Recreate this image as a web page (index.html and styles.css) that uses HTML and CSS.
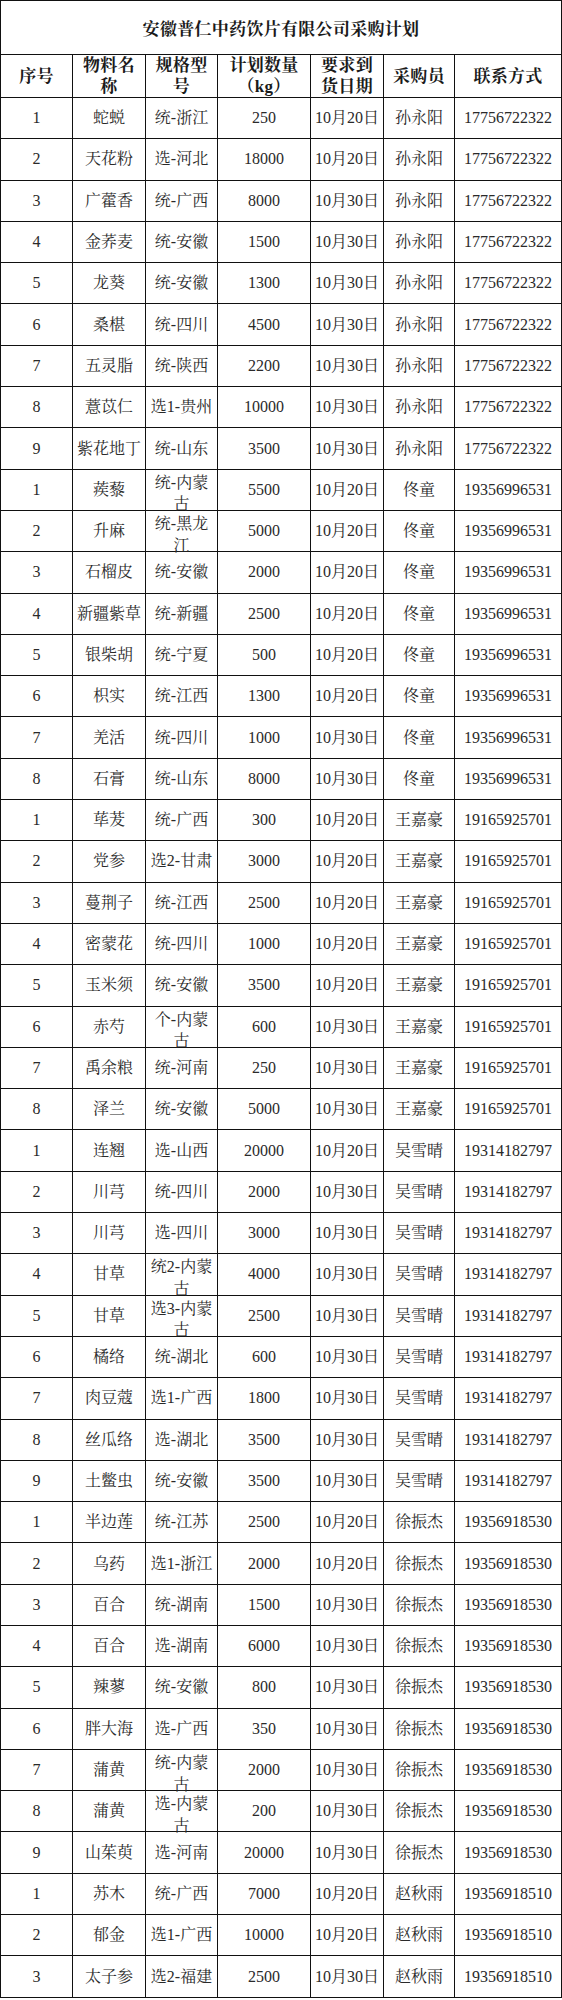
FILE: index.html
```html
<!DOCTYPE html>
<html lang="zh-CN">
<head>
<meta charset="utf-8">
<title>安徽普仁中药饮片有限公司采购计划</title>
<link rel="stylesheet" href="styles.css">
</head>
<body>
<table class="plan">
<colgroup>
<col class="w1"><col class="w2"><col class="w3"><col class="w4"><col class="w5"><col class="w6"><col class="w7">
</colgroup>
<thead>
<tr><td colspan="7" class="title"><div class="c t">安徽普仁中药饮片有限公司采购计划</div></td></tr>
<tr class="head">
<th><div class="c h">序号</div></th>
<th><div class="c h">物料名<br>称</div></th>
<th><div class="c h">规格型<br>号</div></th>
<th><div class="c h">计划数量<br>（kg）</div></th>
<th><div class="c h">要求到<br>货日期</div></th>
<th><div class="c h">采购员</div></th>
<th><div class="c h">联系方式</div></th>
</tr>
</thead>
<tbody>
<tr><td><div class="c">1</div></td><td><div class="c">蛇蜕</div></td><td><div class="c">统-浙江</div></td><td><div class="c">250</div></td><td><div class="c">10月20日</div></td><td><div class="c">孙永阳</div></td><td><div class="c">17756722322</div></td></tr>
<tr><td><div class="c">2</div></td><td><div class="c">天花粉</div></td><td><div class="c">选-河北</div></td><td><div class="c">18000</div></td><td><div class="c">10月20日</div></td><td><div class="c">孙永阳</div></td><td><div class="c">17756722322</div></td></tr>
<tr><td><div class="c">3</div></td><td><div class="c">广藿香</div></td><td><div class="c">统-广西</div></td><td><div class="c">8000</div></td><td><div class="c">10月30日</div></td><td><div class="c">孙永阳</div></td><td><div class="c">17756722322</div></td></tr>
<tr><td><div class="c">4</div></td><td><div class="c">金荞麦</div></td><td><div class="c">统-安徽</div></td><td><div class="c">1500</div></td><td><div class="c">10月30日</div></td><td><div class="c">孙永阳</div></td><td><div class="c">17756722322</div></td></tr>
<tr><td><div class="c">5</div></td><td><div class="c">龙葵</div></td><td><div class="c">统-安徽</div></td><td><div class="c">1300</div></td><td><div class="c">10月30日</div></td><td><div class="c">孙永阳</div></td><td><div class="c">17756722322</div></td></tr>
<tr><td><div class="c">6</div></td><td><div class="c">桑椹</div></td><td><div class="c">统-四川</div></td><td><div class="c">4500</div></td><td><div class="c">10月30日</div></td><td><div class="c">孙永阳</div></td><td><div class="c">17756722322</div></td></tr>
<tr><td><div class="c">7</div></td><td><div class="c">五灵脂</div></td><td><div class="c">统-陕西</div></td><td><div class="c">2200</div></td><td><div class="c">10月30日</div></td><td><div class="c">孙永阳</div></td><td><div class="c">17756722322</div></td></tr>
<tr><td><div class="c">8</div></td><td><div class="c">薏苡仁</div></td><td><div class="c">选1-贵州</div></td><td><div class="c">10000</div></td><td><div class="c">10月30日</div></td><td><div class="c">孙永阳</div></td><td><div class="c">17756722322</div></td></tr>
<tr><td><div class="c">9</div></td><td><div class="c">紫花地丁</div></td><td><div class="c">统-山东</div></td><td><div class="c">3500</div></td><td><div class="c">10月30日</div></td><td><div class="c">孙永阳</div></td><td><div class="c">17756722322</div></td></tr>

<tr><td><div class="c">1</div></td><td><div class="c">蒺藜</div></td><td><div class="c w">统-内蒙<br>古</div></td><td><div class="c">5500</div></td><td><div class="c">10月20日</div></td><td><div class="c">佟童</div></td><td><div class="c">19356996531</div></td></tr>
<tr><td><div class="c">2</div></td><td><div class="c">升麻</div></td><td><div class="c w">统-黑龙<br>江</div></td><td><div class="c">5000</div></td><td><div class="c">10月20日</div></td><td><div class="c">佟童</div></td><td><div class="c">19356996531</div></td></tr>
<tr><td><div class="c">3</div></td><td><div class="c">石榴皮</div></td><td><div class="c">统-安徽</div></td><td><div class="c">2000</div></td><td><div class="c">10月20日</div></td><td><div class="c">佟童</div></td><td><div class="c">19356996531</div></td></tr>
<tr><td><div class="c">4</div></td><td><div class="c">新疆紫草</div></td><td><div class="c">统-新疆</div></td><td><div class="c">2500</div></td><td><div class="c">10月20日</div></td><td><div class="c">佟童</div></td><td><div class="c">19356996531</div></td></tr>
<tr><td><div class="c">5</div></td><td><div class="c">银柴胡</div></td><td><div class="c">统-宁夏</div></td><td><div class="c">500</div></td><td><div class="c">10月20日</div></td><td><div class="c">佟童</div></td><td><div class="c">19356996531</div></td></tr>
<tr><td><div class="c">6</div></td><td><div class="c">枳实</div></td><td><div class="c">统-江西</div></td><td><div class="c">1300</div></td><td><div class="c">10月20日</div></td><td><div class="c">佟童</div></td><td><div class="c">19356996531</div></td></tr>
<tr><td><div class="c">7</div></td><td><div class="c">羌活</div></td><td><div class="c">统-四川</div></td><td><div class="c">1000</div></td><td><div class="c">10月30日</div></td><td><div class="c">佟童</div></td><td><div class="c">19356996531</div></td></tr>
<tr><td><div class="c">8</div></td><td><div class="c">石膏</div></td><td><div class="c">统-山东</div></td><td><div class="c">8000</div></td><td><div class="c">10月30日</div></td><td><div class="c">佟童</div></td><td><div class="c">19356996531</div></td></tr>

<tr><td><div class="c">1</div></td><td><div class="c">荜茇</div></td><td><div class="c">统-广西</div></td><td><div class="c">300</div></td><td><div class="c">10月20日</div></td><td><div class="c">王嘉豪</div></td><td><div class="c">19165925701</div></td></tr>
<tr><td><div class="c">2</div></td><td><div class="c">党参</div></td><td><div class="c">选2-甘肃</div></td><td><div class="c">3000</div></td><td><div class="c">10月20日</div></td><td><div class="c">王嘉豪</div></td><td><div class="c">19165925701</div></td></tr>
<tr><td><div class="c">3</div></td><td><div class="c">蔓荆子</div></td><td><div class="c">统-江西</div></td><td><div class="c">2500</div></td><td><div class="c">10月20日</div></td><td><div class="c">王嘉豪</div></td><td><div class="c">19165925701</div></td></tr>
<tr><td><div class="c">4</div></td><td><div class="c">密蒙花</div></td><td><div class="c">统-四川</div></td><td><div class="c">1000</div></td><td><div class="c">10月20日</div></td><td><div class="c">王嘉豪</div></td><td><div class="c">19165925701</div></td></tr>
<tr><td><div class="c">5</div></td><td><div class="c">玉米须</div></td><td><div class="c">统-安徽</div></td><td><div class="c">3500</div></td><td><div class="c">10月20日</div></td><td><div class="c">王嘉豪</div></td><td><div class="c">19165925701</div></td></tr>
<tr><td><div class="c">6</div></td><td><div class="c">赤芍</div></td><td><div class="c w">个-内蒙<br>古</div></td><td><div class="c">600</div></td><td><div class="c">10月30日</div></td><td><div class="c">王嘉豪</div></td><td><div class="c">19165925701</div></td></tr>
<tr><td><div class="c">7</div></td><td><div class="c">禹余粮</div></td><td><div class="c">统-河南</div></td><td><div class="c">250</div></td><td><div class="c">10月30日</div></td><td><div class="c">王嘉豪</div></td><td><div class="c">19165925701</div></td></tr>
<tr><td><div class="c">8</div></td><td><div class="c">泽兰</div></td><td><div class="c">统-安徽</div></td><td><div class="c">5000</div></td><td><div class="c">10月30日</div></td><td><div class="c">王嘉豪</div></td><td><div class="c">19165925701</div></td></tr>

<tr><td><div class="c">1</div></td><td><div class="c">连翘</div></td><td><div class="c">选-山西</div></td><td><div class="c">20000</div></td><td><div class="c">10月20日</div></td><td><div class="c">吴雪晴</div></td><td><div class="c">19314182797</div></td></tr>
<tr><td><div class="c">2</div></td><td><div class="c">川芎</div></td><td><div class="c">统-四川</div></td><td><div class="c">2000</div></td><td><div class="c">10月30日</div></td><td><div class="c">吴雪晴</div></td><td><div class="c">19314182797</div></td></tr>
<tr><td><div class="c">3</div></td><td><div class="c">川芎</div></td><td><div class="c">选-四川</div></td><td><div class="c">3000</div></td><td><div class="c">10月30日</div></td><td><div class="c">吴雪晴</div></td><td><div class="c">19314182797</div></td></tr>
<tr><td><div class="c">4</div></td><td><div class="c">甘草</div></td><td><div class="c w">统2-内蒙<br>古</div></td><td><div class="c">4000</div></td><td><div class="c">10月30日</div></td><td><div class="c">吴雪晴</div></td><td><div class="c">19314182797</div></td></tr>
<tr><td><div class="c">5</div></td><td><div class="c">甘草</div></td><td><div class="c w">选3-内蒙<br>古</div></td><td><div class="c">2500</div></td><td><div class="c">10月30日</div></td><td><div class="c">吴雪晴</div></td><td><div class="c">19314182797</div></td></tr>
<tr><td><div class="c">6</div></td><td><div class="c">橘络</div></td><td><div class="c">统-湖北</div></td><td><div class="c">600</div></td><td><div class="c">10月30日</div></td><td><div class="c">吴雪晴</div></td><td><div class="c">19314182797</div></td></tr>
<tr><td><div class="c">7</div></td><td><div class="c">肉豆蔻</div></td><td><div class="c">选1-广西</div></td><td><div class="c">1800</div></td><td><div class="c">10月30日</div></td><td><div class="c">吴雪晴</div></td><td><div class="c">19314182797</div></td></tr>
<tr><td><div class="c">8</div></td><td><div class="c">丝瓜络</div></td><td><div class="c">选-湖北</div></td><td><div class="c">3500</div></td><td><div class="c">10月30日</div></td><td><div class="c">吴雪晴</div></td><td><div class="c">19314182797</div></td></tr>
<tr><td><div class="c">9</div></td><td><div class="c">土鳖虫</div></td><td><div class="c">统-安徽</div></td><td><div class="c">3500</div></td><td><div class="c">10月30日</div></td><td><div class="c">吴雪晴</div></td><td><div class="c">19314182797</div></td></tr>

<tr><td><div class="c">1</div></td><td><div class="c">半边莲</div></td><td><div class="c">统-江苏</div></td><td><div class="c">2500</div></td><td><div class="c">10月20日</div></td><td><div class="c">徐振杰</div></td><td><div class="c">19356918530</div></td></tr>
<tr><td><div class="c">2</div></td><td><div class="c">乌药</div></td><td><div class="c">选1-浙江</div></td><td><div class="c">2000</div></td><td><div class="c">10月20日</div></td><td><div class="c">徐振杰</div></td><td><div class="c">19356918530</div></td></tr>
<tr><td><div class="c">3</div></td><td><div class="c">百合</div></td><td><div class="c">统-湖南</div></td><td><div class="c">1500</div></td><td><div class="c">10月30日</div></td><td><div class="c">徐振杰</div></td><td><div class="c">19356918530</div></td></tr>
<tr><td><div class="c">4</div></td><td><div class="c">百合</div></td><td><div class="c">选-湖南</div></td><td><div class="c">6000</div></td><td><div class="c">10月30日</div></td><td><div class="c">徐振杰</div></td><td><div class="c">19356918530</div></td></tr>
<tr><td><div class="c">5</div></td><td><div class="c">辣蓼</div></td><td><div class="c">统-安徽</div></td><td><div class="c">800</div></td><td><div class="c">10月30日</div></td><td><div class="c">徐振杰</div></td><td><div class="c">19356918530</div></td></tr>
<tr><td><div class="c">6</div></td><td><div class="c">胖大海</div></td><td><div class="c">选-广西</div></td><td><div class="c">350</div></td><td><div class="c">10月30日</div></td><td><div class="c">徐振杰</div></td><td><div class="c">19356918530</div></td></tr>
<tr><td><div class="c">7</div></td><td><div class="c">蒲黄</div></td><td><div class="c w">统-内蒙<br>古</div></td><td><div class="c">2000</div></td><td><div class="c">10月30日</div></td><td><div class="c">徐振杰</div></td><td><div class="c">19356918530</div></td></tr>
<tr><td><div class="c">8</div></td><td><div class="c">蒲黄</div></td><td><div class="c w">选-内蒙<br>古</div></td><td><div class="c">200</div></td><td><div class="c">10月30日</div></td><td><div class="c">徐振杰</div></td><td><div class="c">19356918530</div></td></tr>
<tr><td><div class="c">9</div></td><td><div class="c">山茱萸</div></td><td><div class="c">选-河南</div></td><td><div class="c">20000</div></td><td><div class="c">10月30日</div></td><td><div class="c">徐振杰</div></td><td><div class="c">19356918530</div></td></tr>

<tr><td><div class="c">1</div></td><td><div class="c">苏木</div></td><td><div class="c">统-广西</div></td><td><div class="c">7000</div></td><td><div class="c">10月20日</div></td><td><div class="c">赵秋雨</div></td><td><div class="c">19356918510</div></td></tr>
<tr><td><div class="c">2</div></td><td><div class="c">郁金</div></td><td><div class="c">选1-广西</div></td><td><div class="c">10000</div></td><td><div class="c">10月20日</div></td><td><div class="c">赵秋雨</div></td><td><div class="c">19356918510</div></td></tr>
<tr><td><div class="c">3</div></td><td><div class="c">太子参</div></td><td><div class="c">选2-福建</div></td><td><div class="c">2500</div></td><td><div class="c">10月30日</div></td><td><div class="c">赵秋雨</div></td><td><div class="c">19356918510</div></td></tr>
</tbody>
</table>
</body>
</html>
```
FILE: styles.css
```css
html, body {
  margin: 0;
  padding: 0;
  background: #fff;
}

body {
  font-family: "Liberation Serif", "Noto Serif CJK SC", "Noto Sans CJK SC", serif;
  color: #2a2a2a;
}

.plan {
  border-collapse: collapse;
  table-layout: fixed;
  width: 561px;
}

.w1 { width: 72px; }
.w2 { width: 73px; }
.w3 { width: 72px; }
.w4 { width: 93px; }
.w5 { width: 73px; }
.w6 { width: 71px; }
.w7 { width: 107px; }

.plan td,
.plan th {
  border: 1px solid #111;
  padding: 0;
  vertical-align: middle;
  text-align: center;
}

.c {
  height: 40.3px;
  display: flex;
  align-items: center;
  justify-content: center;
  font-size: 16px;
  line-height: 20px;
  white-space: nowrap;
  overflow: visible;
}

.c.w {
  align-items: flex-start;
  line-height: 21.7px;
  padding-top: 2px;
  box-sizing: border-box;
}

.c.t {
  height: 53px;
  font-size: 17px;
  font-weight: bold;
  color: #1a1a1a;
  letter-spacing: 0.3px;
  padding-top: 4px;
  box-sizing: border-box;
}

.c.h {
  height: 42px;
  font-size: 17px;
  font-weight: bold;
  line-height: 21px;
  color: #1a1a1a;
  letter-spacing: 0.3px;
}
```
